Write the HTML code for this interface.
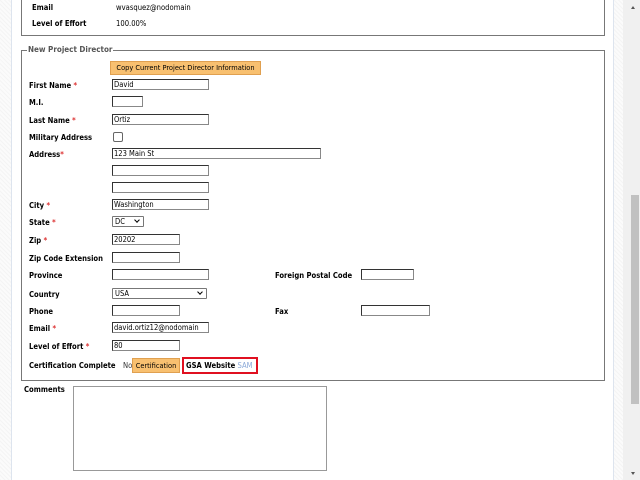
<!DOCTYPE html>
<html><head><style>
body{margin:0;width:640px;height:480px;overflow:hidden;background:#fff;font-family:"DejaVu Sans Condensed","DejaVu Sans","Liberation Sans",sans-serif;font-stretch:condensed;font-size:7.6px;color:#000;position:relative}
div{white-space:nowrap}
.a{position:absolute}
.l{position:absolute;left:29px;font-weight:bold;font-size:7.6px;line-height:10px;margin-top:1px}
.r{color:#d33}
.i{position:absolute;left:112px;height:9px;border:1px solid #333;border-right-color:#888;border-bottom-color:#888;font-size:7.5px;line-height:9px;padding-left:1px;background:#fff;overflow:hidden}
.s{position:absolute;height:9px;border:1px solid #777;border-radius:1px;font-size:7.5px;line-height:9px;padding-left:2px;background:#fff}
.s:after{content:"";position:absolute;right:4px;top:1px;width:3px;height:3px;border-right:1.3px solid #000;border-bottom:1.3px solid #000;transform:rotate(45deg)}
.pat{background:repeating-linear-gradient(45deg,#f4f4f4 0 1px,#fbfbfb 1px 3px)}
</style></head><body>
<div class="a pat" style="left:0;top:0;width:11px;height:480px;border-right:1px solid #dde4ee"></div>
<div class="a pat" style="left:613px;top:0;width:10px;height:480px;border-left:1px solid #dde4ee"></div>
<div class="a" style="left:623px;top:0;width:17px;height:480px;background:#f0f0f0"></div>
<div class="a" style="left:631px;top:4px;width:0;height:0;border:2.5px solid transparent;border-bottom:3px solid #555"></div>
<div class="a" style="left:631px;top:472px;width:0;height:0;border:2.5px solid transparent;border-top:3px solid #555"></div>
<div class="a" style="left:631px;top:195px;width:8px;height:209px;background:#c1c1c1"></div>

<div class="a" style="left:21px;top:-2px;width:582px;height:37px;border:1px solid #777;border-top:none"></div>
<div class="a" style="left:32px;top:3px;font-weight:bold">Email</div>
<div class="a" style="left:116px;top:3px">wvasquez@nodomain</div>
<div class="a" style="left:32px;top:19px;font-weight:bold">Level of Effort</div>
<div class="a" style="left:116px;top:19px">100.00%</div>

<div class="a" style="left:21px;top:50px;width:582px;height:329px;border:1px solid #777"></div>
<div class="a" style="left:27px;top:45px;background:#fff;padding:0 1px;font-weight:bold;color:#555;font-size:8px">New Project Director</div>
<div class="a" style="left:110px;top:61px;width:149px;height:12px;background:#f8c070;border:1px solid #e0a050;font-size:7.4px;line-height:12px;text-align:center">Copy Current Project Director Information</div>

<div class="l" style="top:80px">First Name <span class="r">*</span></div><div class="i" style="top:79px;width:94px">David</div>
<div class="l" style="top:97px">M.I.</div><div class="i" style="top:96px;width:28px"></div>
<div class="l" style="top:115px">Last Name <span class="r">*</span></div><div class="i" style="top:114px;width:94px">Ortiz</div>
<div class="l" style="top:132px">Military Address</div><div class="a" style="left:113px;top:132px;width:8px;height:8px;border:1px solid #666;border-radius:2px"></div>
<div class="l" style="top:149px">Address<span class="r">*</span></div><div class="i" style="top:148px;width:206px">123 Main St</div>
<div class="i" style="top:165px;width:94px"></div>
<div class="i" style="top:182px;width:94px"></div>
<div class="l" style="top:200px">City <span class="r">*</span></div><div class="i" style="top:199px;width:94px">Washington</div>
<div class="l" style="top:217px">State <span class="r">*</span></div><div class="s" style="left:112px;top:216px;width:28px">DC</div>
<div class="l" style="top:235px">Zip <span class="r">*</span></div><div class="i" style="top:234px;width:65px">20202</div>
<div class="l" style="top:253px">Zip Code Extension</div><div class="i" style="top:252px;width:65px"></div>
<div class="l" style="top:270px">Province</div><div class="i" style="top:269px;width:94px"></div>
<div class="l" style="left:275px;top:270px">Foreign Postal Code</div><div class="i" style="left:361px;top:269px;width:50px"></div>
<div class="l" style="top:289px">Country</div><div class="s" style="left:112px;top:288px;width:91px">USA</div>
<div class="l" style="top:306px">Phone</div><div class="i" style="top:305px;width:65px"></div>
<div class="l" style="left:275px;top:306px">Fax</div><div class="i" style="left:361px;top:305px;width:66px"></div>
<div class="l" style="top:323px">Email <span class="r">*</span></div><div class="i" style="top:322px;width:94px">david.ortiz12@nodomain</div>
<div class="l" style="top:341px">Level of Effort <span class="r">*</span></div><div class="i" style="top:340px;width:65px">80</div>
<div class="l" style="top:360px">Certification Complete</div>
<div class="a" style="left:123px;top:361px;color:#333">No</div>
<div class="a" style="left:132px;top:358px;width:46px;height:13px;background:#f8c070;border:1px solid #e0a050;font-size:7.4px;line-height:13px;text-align:center">Certification</div>
<div class="a" style="left:182px;top:357px;width:70px;height:13px;border:2px solid #e01020;line-height:13px;padding-left:2px"><b>GSA Website</b> <span style="color:#8aa8d8">SAM</span></div>

<div class="l" style="left:24px;top:384px">Comments</div>
<div class="a" style="left:73px;top:386px;width:252px;height:83px;border:1px solid #999"></div>
</body></html>
